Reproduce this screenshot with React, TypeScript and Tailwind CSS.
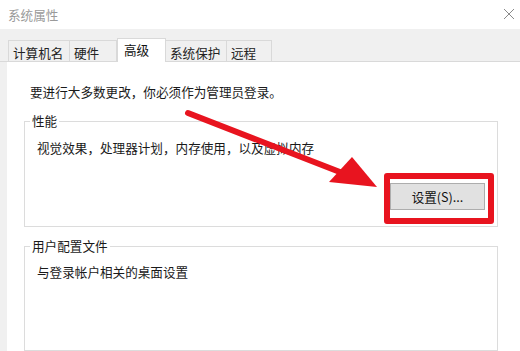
import React from 'react';

const tabs = [
  { label: '计算机名', w: 'w-[62px]' },
  { label: '硬件', w: 'w-[47px]' },
  { label: '高级', w: 'w-[49px]', active: true },
  { label: '系统保护', w: 'w-[61px]' },
  { label: '远程', w: 'w-[45px]' },
];

export default function App() {
  return (
    <div
      className="relative w-[520px] h-[351px] overflow-hidden bg-white text-[12.6px] leading-4 text-[#1a1a1a]"
      style={{ fontFamily: '"Noto Sans CJK SC", "Noto Sans", sans-serif' }}
    >
      {/* Title bar */}
      <div className="h-[29px] flex items-center justify-between pl-[8px] pr-[3px]">
        <span className="text-[#9a9a9a]">系统属性</span>
        <svg width="12" height="12" viewBox="0 0 12 12" className="mr-[2px] -mt-[2px]">
          <path d="M1 1 L11 11 M11 1 L1 11" stroke="#8a8a8a" strokeWidth="1" />
        </svg>
      </div>

      {/* Body */}
      <div className="bg-[#f0f0f0] h-[322px] flex flex-col">
        {/* Tab strip */}
        <div className="h-[33px] flex items-end pl-[8px] border-b border-[#d9d9d9]">
          {tabs.map((t) =>
            t.active ? (
              <div
                key={t.label}
                className={`${t.w} h-[24px] -mb-[1px] bg-white border border-b-0 border-[#d9d9d9] px-[6px] pt-[3px] text-[#111]`}
              >
                {t.label}
              </div>
            ) : (
              <div
                key={t.label}
                className={`${t.w} h-[21px] border border-b-0 border-l-0 first:border-l border-[#d9d9d9] px-[4px] pt-[4px] text-[#222]`}
              >
                {t.label}
              </div>
            )
          )}
        </div>

        {/* Panel */}
        <div className="flex-1 ml-[7px] bg-white pl-[17px] pr-[22px] pt-[22px]">
          <p className="pl-[6px]">要进行大多数更改，你必须作为管理员登录。</p>

          <fieldset className="mt-[13px] border border-[#dcdcdc] px-[12px] pb-[16px]">
            <legend className="-ml-[7px] px-[2px]">性能</legend>
            <p className="mt-[11px]">视觉效果，处理器计划，内存使用，以及虚拟内存</p>
            <div className="mt-[27px] flex justify-end">
              <div className="relative">
                <button className="w-[95px] h-[27px] bg-[#e1e1e1] border border-[#adadad] text-[#111]">
                  设置(S)...
                </button>
                <div className="absolute -left-[6px] -top-[10px] -right-[9px] -bottom-[14px] border-[6px] border-[#e8141f] rounded-[3px]" />
              </div>
            </div>
          </fieldset>

          <fieldset className="mt-[11px] h-[113px] border border-[#dcdcdc] px-[12px]">
            <legend className="-ml-[7px] px-[2px]">用户配置文件</legend>
            <p className="mt-[10px]">与登录帐户相关的桌面设置</p>
          </fieldset>
        </div>
      </div>

      {/* Red arrow */}
      <svg className="absolute inset-0 pointer-events-none" width="520" height="351" viewBox="0 0 520 351">
        <line x1="188" y1="113" x2="345" y2="174" stroke="#e8141f" strokeWidth="6" strokeLinecap="round" />
        <polygon points="377,187 352,157 329,182" fill="#e8141f" />
      </svg>
    </div>
  );
}
